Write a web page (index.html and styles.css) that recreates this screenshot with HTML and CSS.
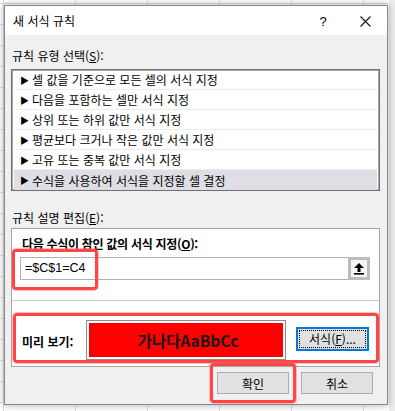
FILE: index.html
```html
<!DOCTYPE html>
<html lang="ko">
<head>
    <meta charset="UTF-8">
    <title>새 서식 규칙</title>
    <link rel="stylesheet" href="styles.css">
</head>
<body>
    <div class="dialog">
        <div class="titlebar">
            <span class="title">새 서식 규칙</span>
            <span class="help">?</span>
            <span class="close">
                <svg width="11" height="11" viewBox="0 0 11 11"><path d="M0.5 0.5 L10.5 10.5 M10.5 0.5 L0.5 10.5" stroke="#111" stroke-width="1.1" fill="none"/></svg>
            </span>
        </div>

        <div class="content">
            <div class="label">규칙 유형 선택(<u>S</u>):</div>
            <ul class="rule-list">
                <li><span class="tri">▶</span>셀 값을 기준으로 모든 셀의 서식 지정</li>
                <li><span class="tri">▶</span>다음을 포함하는 셀만 서식 지정</li>
                <li><span class="tri">▶</span>상위 또는 하위 값만 서식 지정</li>
                <li><span class="tri">▶</span>평균보다 크거나 작은 값만 서식 지정</li>
                <li><span class="tri">▶</span>고유 또는 중복 값만 서식 지정</li>
                <li class="selected"><span class="tri">▶</span>수식을 사용하여 서식을 지정할 셀 결정</li>
            </ul>

            <div class="label label-desc">규칙 설명 편집(<u>E</u>):</div>
            <div class="desc">
                <div class="desc-title">다음 수식이 참인 값의 서식 지정(<u>O</u>):</div>
                <div class="formula">
                    <div class="formula-input">=$C$1=C4</div>
                    <div class="ref-btn">
                        <svg width="12" height="13" viewBox="0 0 12 13"><path d="M6 1 L11 6 L7.5 6 L7.5 10 L4.5 10 L4.5 6 L1 6 Z" fill="#000"/><rect x="1" y="11" width="10" height="1.6" fill="#000"/></svg>
                    </div>
                </div>
                <div class="preview">
                    <span class="preview-label">미리 보기:</span>
                    <div class="preview-box"><div class="preview-fill">가나다AaBbCc</div></div>
                    <button class="format-btn"><span class="focus">서식(<u>F</u>)...</span></button>
                </div>
            </div>

            <div class="actions">
                <button class="btn">확인</button>
                <button class="btn">취소</button>
            </div>
        </div>

        <div class="mark mark-formula"></div>
        <div class="mark mark-preview"></div>
        <div class="mark mark-ok"></div>
    </div>
</body>
</html>
```

FILE: styles.css
```css
* {
    box-sizing: border-box;
    margin: 0;
    padding: 0;
}

body {
    font-family: 'Noto Sans CJK KR', 'Noto Sans', sans-serif;
    font-size: 12px;
    color: #000;
    width: 395px;
    height: 411px;
    overflow: hidden;
    background-color: #fff;
    background-image:
        linear-gradient(90deg, transparent 389px, #ececec 389px),
        linear-gradient(#dcdcdc 1px, transparent 1px),
        linear-gradient(90deg, #dcdcdc 1px, transparent 1px);
    background-size: 100% 100%, 100% 21px, 72px 100%;
    background-position: 0 0, 0 3px, 3px 0;
    padding: 5px 0 0 4px;
}

.dialog {
    position: relative;
    width: 384px;
    height: 400px;
    background: #f0f0f0;
    border: 1px solid #8a8a8a;
    box-shadow: 0 0 7px rgba(0, 0, 0, 0.35);
}

.titlebar {
    height: 29px;
    background: #fff;
    display: flex;
    align-items: center;
    padding: 0 0 0 8px;
}

.title {
    flex: 1;
    line-height: 16px;
    margin-top: 1px;
}

.help {
    font-family: 'Liberation Sans', sans-serif;
    font-size: 13px;
    width: 20px;
    text-align: center;
    margin-right: 27px;
    margin-top: 2px;
}

.close {
    display: flex;
    width: 11px;
    margin-right: 16px;
    margin-top: 1px;
}

.content {
    padding: 13px 7px 0 6px;
}

.label {
    line-height: 16px;
    height: 16px;
    padding-left: 1px;
    margin-bottom: 5px;
}

.label-desc {
    margin-top: 19px;
    margin-bottom: 2px;
}

.rule-list {
    list-style: none;
    background: #fff;
    border: 1px solid #6f6f6f;
    box-shadow: inset 0 0 0 1px #a8a8a8;
    padding: 0 2px;
    height: 122px;
}

.rule-list li {
    height: 20px;
    line-height: 19px;
    border-bottom: 1px solid #ececec;
    display: flex;
    align-items: center;
    padding-left: 6px;
}

.rule-list li.selected {
    background: #dedee4;
    border-bottom: none;
}

.tri {
    font-size: 9px;
    width: 12px;
    margin-top: 1px;
}

.desc {
    background: #fff;
    border: 1px solid #a5a5a5;
    height: 139px;
}

.desc-title {
    font-weight: bold;
    line-height: 16px;
    padding: 7px 0 0 10px;
    letter-spacing: -0.3px;
}

.formula {
    display: flex;
    margin: 5px 9px 0 8px;
    height: 23px;
    border: 1px solid #b0b0b0;
}

.formula-input {
    flex: 1;
    font-family: 'Liberation Sans', sans-serif;
    font-size: 12.5px;
    line-height: 21px;
    padding-left: 4px;
}

.ref-btn {
    width: 22px;
    margin: -1px -1px -1px 0;
    border: 3px solid #bcbcbc;
    background: #f6f6f6;
    display: flex;
    align-items: center;
    justify-content: center;
}

.preview {
    margin-top: 20px;
    border-top: 1px solid #c8c8c8;
    height: 66px;
    display: flex;
    align-items: flex-start;
    padding: 19px 0 0 10px;
}

.preview-label {
    font-weight: bold;
    width: 64px;
    line-height: 16px;
    margin-top: 14px;
}

.preview-box {
    width: 200px;
    height: 40px;
    border: 1px solid #8c8c8c;
    padding: 2px;
}

.preview-fill {
    height: 100%;
    background: #ff0000;
    color: #1a1a1a;
    font-size: 15.5px;
    font-weight: bold;
    display: flex;
    align-items: center;
    justify-content: center;
    padding-left: 4px;
}

.format-btn {
    font-family: inherit;
    font-size: 12px;
    color: #000;
    margin: 7px 0 0 10px;
    width: 73px;
    height: 24px;
    background: #e1e1e1;
    border: 2px solid #0078d7;
    padding: 1px;
    display: flex;
}

.format-btn .focus {
    flex: 1;
    border: 1px dotted #000;
    line-height: 16px;
}

.actions {
    display: flex;
    justify-content: flex-end;
    gap: 12px;
    margin-top: 5px;
    padding-right: 7px;
}

.btn {
    font-family: inherit;
    font-size: 12px;
    color: #000;
    width: 72px;
    height: 22px;
    background: #e1e1e1;
    border: 1px solid #adadad;
}

.mark {
    position: absolute;
    border: 3px solid #ff4545;
    border-radius: 4px;
    box-shadow: 0 0 0 1px rgba(255, 120, 120, 0.45);
}

.mark-formula {
    left: 7px;
    top: 243px;
    width: 86px;
    height: 41px;
}

.mark-preview {
    left: 8px;
    top: 307px;
    width: 366px;
    height: 50px;
}

.mark-ok {
    left: 205px;
    top: 357px;
    width: 86px;
    height: 40px;
}
```
